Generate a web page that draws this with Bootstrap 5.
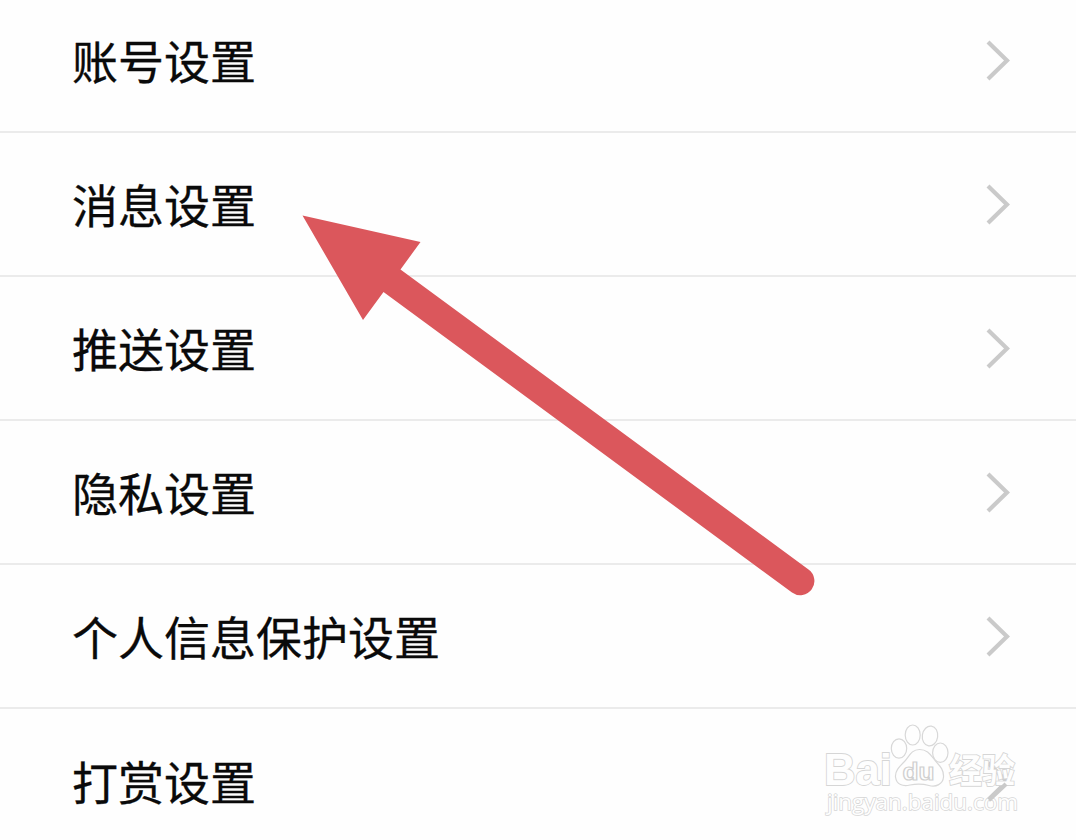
<!DOCTYPE html>
<html lang="zh-CN">
<head>
    <meta charset="UTF-8">
    <meta name="viewport" content="width=device-width, initial-scale=1.0">
    <title>设置</title>
    <link href="https://cdn.jsdelivr.net/npm/bootstrap@5.3.0/dist/css/bootstrap.min.css" rel="stylesheet">
    <style>
        body { background: #fefefe; font-family: "Noto Sans CJK SC", sans-serif; }
        .screen { height: 840px; }
        .settings { margin-top: -11px; --bs-list-group-bg: #fefefe; --bs-list-group-border-color: #ebebeb; }
        .settings .list-group-item { height: 144px; padding: 0 66px 0 72px; border-width: 0 0 2px; color: #0a0a0a; }
        .label-text { font-size: 46px; line-height: 60px; padding-bottom: 2px; -webkit-text-stroke: .3px #0a0a0a; }
        .chevron { width: 24px; height: 42px; }
        .overlay { pointer-events: none; z-index: 2; }
        .wm-text { fill: #fefefe; stroke: #d6d6d6; stroke-width: 1.8; paint-order: stroke; }
    </style>
</head>
<body>
<div class="screen position-relative overflow-hidden">
    <div class="list-group list-group-flush settings" id="settings"></div>

    <!-- pointer arrow -->
    <svg class="overlay position-absolute top-0 start-0" width="1076" height="840" viewBox="0 0 1076 840">
        <path d="M302.500 215.500 L420.500 242 L400.500 269.500 L808.500 569.500 A14 14 0 0 1 792 592.500 L383.500 292 L363 320 Z" fill="#db575c"/>
    </svg>

    <!-- watermark -->
    <svg class="overlay position-absolute top-0 start-0" width="1076" height="840" viewBox="0 0 1076 840">
        <g class="wm-text">
            <text x="824" y="784.500" font-family="Liberation Sans, sans-serif" font-weight="700" font-size="45" textLength="68" lengthAdjust="spacingAndGlyphs">Bai</text>
            <text x="949" y="782.500" font-family="Noto Sans CJK SC, sans-serif" font-weight="700" font-size="34" textLength="66" lengthAdjust="spacingAndGlyphs">经验</text>
            <text x="827" y="810" font-family="Open Sans, sans-serif" font-weight="400" font-size="22" stroke-width="1.500" textLength="191" lengthAdjust="spacingAndGlyphs">jingyan.baidu.com</text>
        </g>
        <g fill="#fefefe" stroke="#d8d8d8" stroke-width="1.200">
            <ellipse cx="899" cy="748.500" rx="7.700" ry="9.700"/>
            <ellipse cx="912.700" cy="735" rx="7.500" ry="10"/>
            <ellipse cx="930" cy="736" rx="7.700" ry="10" transform="rotate(8 930 736)"/>
            <ellipse cx="940.300" cy="752.700" rx="7.700" ry="9.700"/>
            <path d="M919.500 749.500 C911 749.500 909 757 904 762 C899 767 895 771 895.500 777 C896.500 785 903 786.500 910 785 C917 783.500 922 783.500 929 785.500 C936 787.500 943 784 943.500 777 C944 770 940 766 935.500 761 C930.500 755 928 749.500 919.500 749.500 Z"/>
            <text x="902.500" y="779.500" font-family="Liberation Sans, sans-serif" font-weight="700" font-size="24" stroke="#d0d0d0" textLength="32" lengthAdjust="spacingAndGlyphs">du</text>
        </g>
        <!-- chevron tail showing through below the mark -->
        <path d="M1006 784 L989 800" stroke="#cacaca" stroke-width="4.200" fill="none"/>
    </svg>
</div>
<script src="https://cdn.jsdelivr.net/npm/bootstrap@5.3.0/dist/js/bootstrap.bundle.min.js"></script>
<script>
const items = ['账号设置', '消息设置', '推送设置', '隐私设置', '个人信息保护设置', '打赏设置'];
let html = '';
for (const name of items) {
    html += `<div class="list-group-item d-flex align-items-center justify-content-between">
        <span class="label-text">${name}</span>
        <svg class="chevron" viewBox="0 0 24 42" fill="none" stroke="#cacaca" stroke-width="4.200">
            <path d="M2 3 L21 21.500 L2 40"/>
        </svg>
    </div>`;
}
document.getElementById('settings').innerHTML = html;
</script>
</body>
</html>
